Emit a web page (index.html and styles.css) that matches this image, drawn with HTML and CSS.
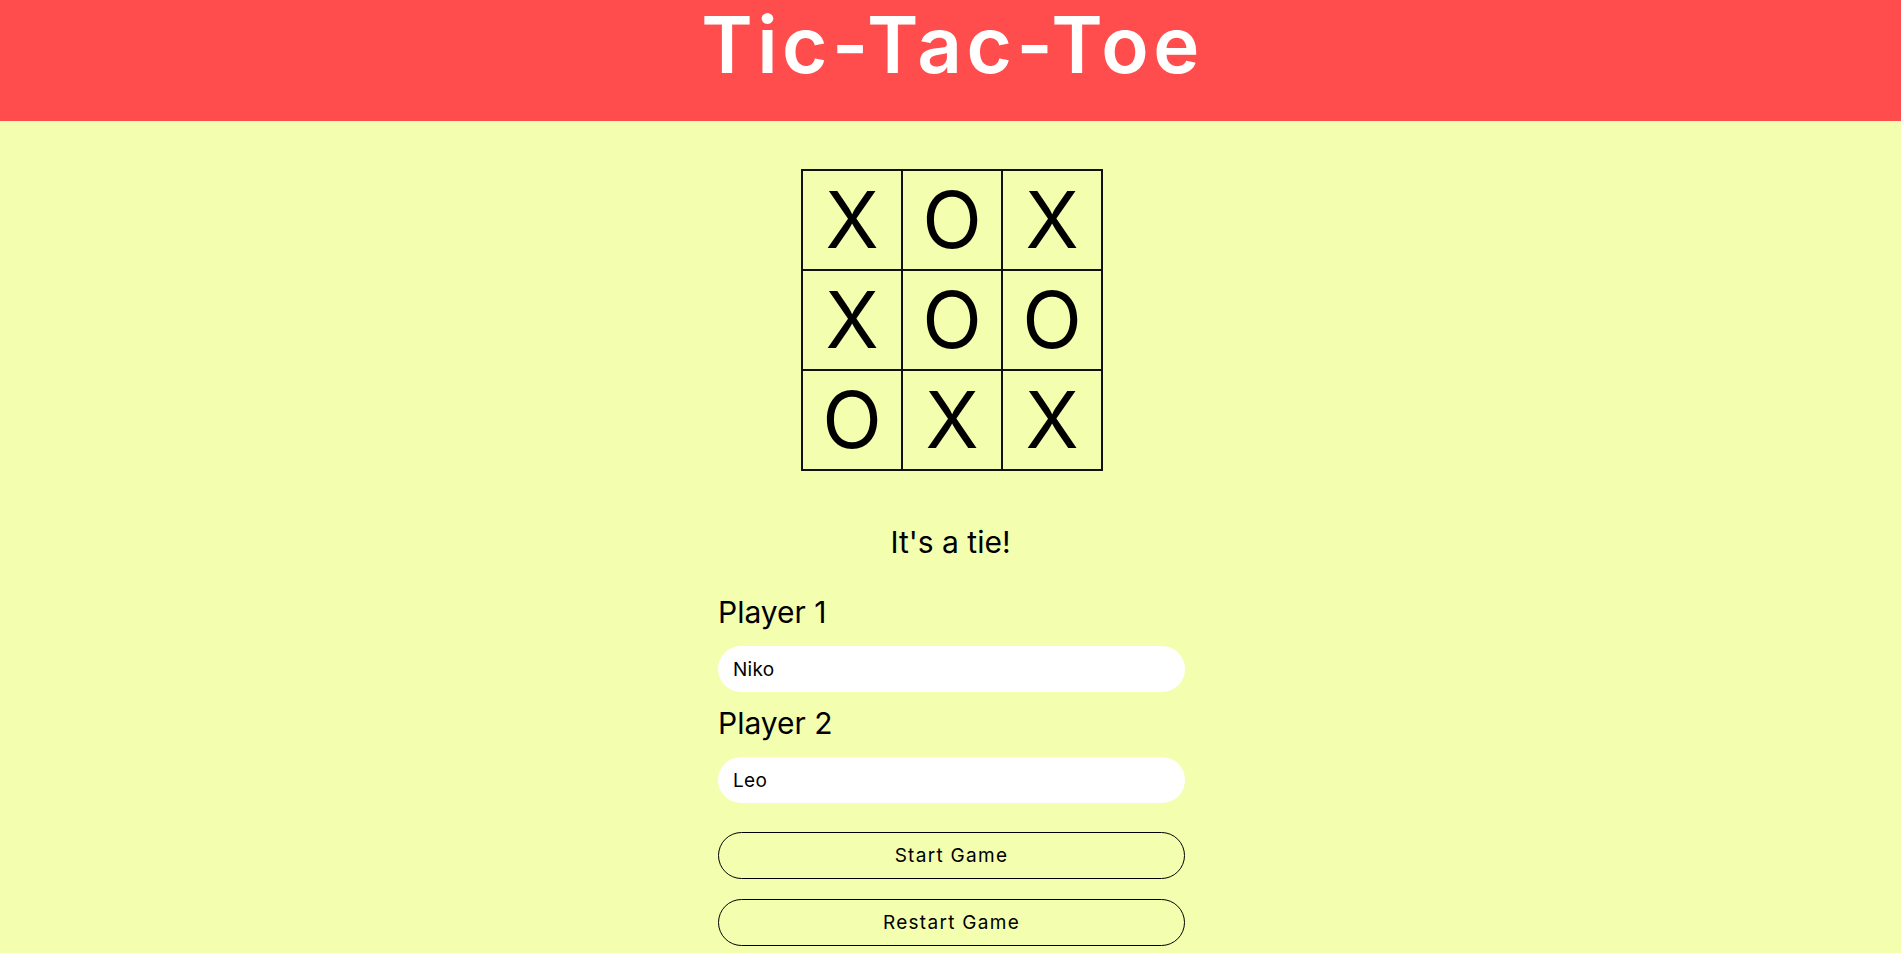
FILE: index.html
```html
<!DOCTYPE html>
<html lang="en">
<head>
    <meta charset="UTF-8">
    <meta name="viewport" content="width=device-width, initial-scale=1.0">
    <title>Tic-Tac-Toe</title>
    <link rel="stylesheet" href="styles.css">
</head>
<body>
    <header class="header">
        <h1 class="title">Tic-Tac-Toe</h1>
    </header>

    <main class="main">
        <div class="board">
            <div class="cell">X</div>
            <div class="cell">O</div>
            <div class="cell">X</div>
            <div class="cell">X</div>
            <div class="cell">O</div>
            <div class="cell">O</div>
            <div class="cell">O</div>
            <div class="cell">X</div>
            <div class="cell">X</div>
        </div>

        <p class="message">It's a tie!</p>

        <form class="players">
            <label class="player-label" for="player1">Player 1</label>
            <input class="player-input" type="text" id="player1" value="Niko">
            <label class="player-label second" for="player2">Player 2</label>
            <input class="player-input" type="text" id="player2" value="Leo">

            <div class="buttons">
                <button type="button" class="btn">Start Game</button>
                <button type="button" class="btn">Restart Game</button>
            </div>
        </form>
    </main>
</body>
</html>
```

FILE: styles.css
```css
body {
    margin: 0;
    background-color: #f3ffaf;
    font-family: 'Inter', 'Lato', sans-serif;
    color: #000;
}
.header {
    background-color: #ff4d4d;
    height: 121px;
    text-align: center;
}
.title {
    margin: 0;
    padding-left: 4px;
    color: #fff;
    font-size: 78px;
    font-weight: 600;
    letter-spacing: 4.5px;
    line-height: 90px;
}
.main {
    display: flex;
    flex-direction: column;
    align-items: center;
}
.board {
    margin-top: 48px;
    margin-left: 3px;
    display: grid;
    grid-template-columns: repeat(3, 98px);
    grid-template-rows: repeat(3, 98px);
    gap: 2px;
    padding: 2px;
    background-color: #111;
}
.cell {
    background-color: #f3ffaf;
    display: flex;
    align-items: center;
    justify-content: center;
    font-size: 78px;
    font-weight: 400;
    line-height: 1;
}
.message {
    margin: 53px 0 0;
    font-size: 30px;
    line-height: 36px;
}
.players {
    width: 467px;
    margin-left: 2px;
    margin-top: 34px;
    display: flex;
    flex-direction: column;
}
.player-label {
    font-size: 30px;
    line-height: 36px;
    margin-bottom: 16px;
}
.player-label.second {
    margin-top: 13px;
}
.player-input {
    height: 46px;
    box-sizing: border-box;
    border: none;
    border-radius: 23px;
    padding: 0 15px;
    background-color: #fff;
    font-family: inherit;
    font-size: 19px;
    letter-spacing: 0.3px;
    color: #000;
}
.buttons {
    margin-top: 29px;
    display: flex;
    flex-direction: column;
    gap: 20px;
}
.btn {
    height: 47px;
    border: 1px solid #000;
    border-radius: 24px;
    background: transparent;
    font-family: inherit;
    font-size: 19px;
    letter-spacing: 1.3px;
    color: #000;
    cursor: pointer;
}
```
